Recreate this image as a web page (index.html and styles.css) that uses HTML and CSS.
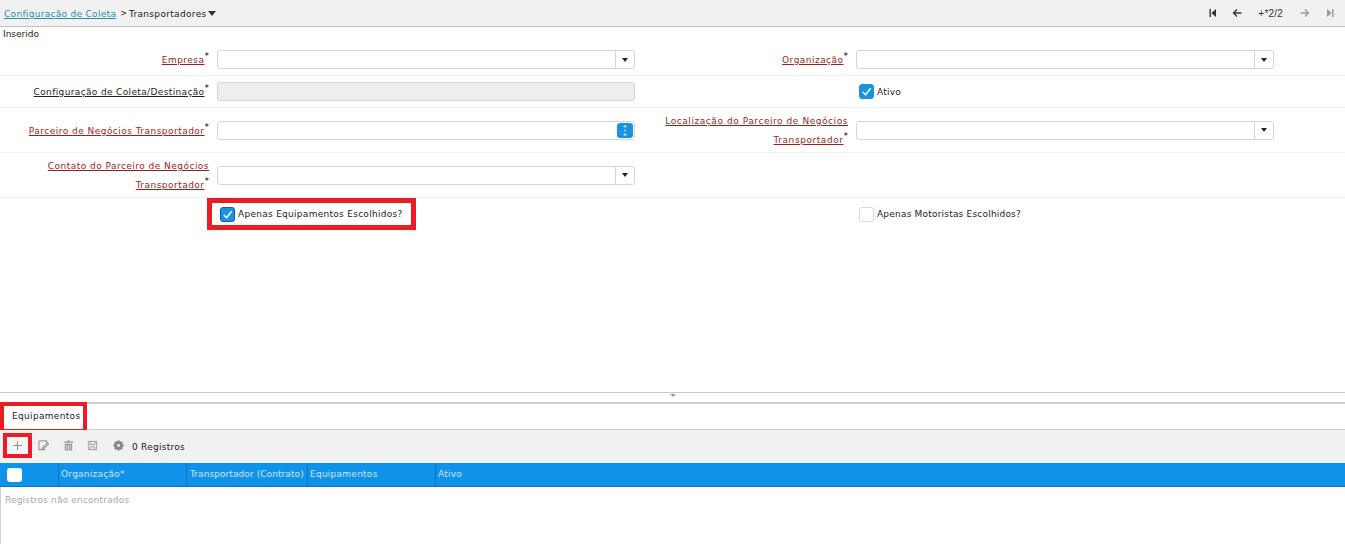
FILE: index.html
```html
<!DOCTYPE html>
<html lang="pt">
<head>
<meta charset="utf-8">
<title>Transportadores</title>
<link rel="stylesheet" href="styles.css">
</head>
<body>
<div class="page">
  <header class="topbar">
    <div class="crumbs">
      <a class="crumb-link" href="#">Configuração de Coleta</a>
      <span class="crumb-sep">&gt;</span>
      <span class="crumb-current">Transportadores</span>
      <span class="crumb-caret"></span>
    </div>
    <nav class="pager">
      <svg class="pg-icon" viewBox="0 0 10 10"><path d="M1.500 1v8h1.400V1zM8 1 3.400 5 8 9z" fill="#333"/></svg>
      <svg class="pg-icon arrow" viewBox="0 0 10 10"><path d="M9.500 5H1.500M5 1.500 1.500 5 5 8.500" fill="none" stroke="#333" stroke-width="1.300"/></svg>
      <span class="pg-count">+*2/2</span>
      <svg class="pg-icon arrow off" viewBox="0 0 10 10"><path d="M.5 5h8M5 1.500 8.500 5 5 8.500" fill="none" stroke="#999" stroke-width="1.300"/></svg>
      <svg class="pg-icon last off" viewBox="0 0 10 10"><path d="M8.500 1v8H7.100V1zM2 1l4.600 4L2 9z" fill="#999"/></svg>
    </nav>
  </header>
  <div class="status">Inserido</div>
  <main class="form">
    <div class="row r1">
      <label class="lbl req">Empresa<sup>*</sup></label>
      <div class="input combo"><span class="btn"><i class="tri"></i></span></div>
      <label class="lbl req">Organização<sup>*</sup></label>
      <div class="input combo"><span class="btn"><i class="tri"></i></span></div>
    </div>
    <div class="row r2">
      <label class="lbl">Configuração de Coleta/Destinação<sup>*</sup></label>
      <div class="input disabled"></div>
      <span></span>
      <div class="check-cell"><span class="cb on"><svg viewBox="0 0 14 14"><path d="M3 7.500 6 10.500 11.500 3.500" fill="none" stroke="#fff" stroke-width="1.600"/></svg></span><span class="cb-text">Ativo</span></div>
    </div>
    <div class="row r3">
      <label class="lbl req">Parceiro de Negócios Transportador<sup>*</sup></label>
      <div class="input search"><span class="dots"><svg viewBox="0 0 16 15"><path d="M8 3v1.500M8 6.500v2M8 10.500V12M6.500 4 8 2.500 9.500 4M6.500 11 8 12.500 9.500 11" fill="none" stroke="#fff" stroke-width="1"/></svg></span></div>
      <label class="lbl req wide"><span class="line">Localização do Parceiro de Negócios</span><span class="line">Transportador<sup>*</sup></span></label>
      <div class="input combo"><span class="btn"><i class="tri"></i></span></div>
    </div>
    <div class="row r3">
      <label class="lbl req"><span class="line">Contato do Parceiro de Negócios</span><span class="line">Transportador<sup>*</sup></span></label>
      <div class="input combo"><span class="btn"><i class="tri"></i></span></div>
    </div>
    <div class="row r5">
      <span></span>
      <div class="check-cell mark"><span class="cb on dark"><svg viewBox="0 0 14 14"><path d="M3 7.500 6 10.500 11.500 3.500" fill="none" stroke="#fff" stroke-width="1.600"/></svg></span><span class="cb-text">Apenas Equipamentos Escolhidos?</span></div>
      <span></span>
      <div class="check-cell"><span class="cb"></span><span class="cb-text">Apenas Motoristas Escolhidos?</span></div>
    </div>
  </main>
  <div class="splitter"><i class="split-tri"></i></div>
  <section class="detail">
    <div class="tabs"><span class="tab">Equipamentos</span></div>
    <div class="toolbar">
      <span class="tool add"><svg viewBox="0 0 12 12"><path d="M6 1v10M1 6h10" stroke="#888" stroke-width="1" fill="none"/></svg></span>
      <svg class="tool-icon edit" viewBox="0 0 12 12"><path d="M1 1h8.500v2.500M8 10.500H1V1M4.500 8.500l6-5.500 1 1.500-5.500 5-1.500.3z" fill="none" stroke="#999" stroke-width="1.200"/></svg>
      <svg class="tool-icon trash" viewBox="0 0 12 12"><path d="M4.500 .5h3v1H11V3H1V1.500h3.500zM2 4h8v7.500H2z" fill="#999"/><path d="M4 5.500v5M6 5.500v5M8 5.500v5" stroke="#eee" stroke-width=".8"/></svg>
      <svg class="tool-icon save" viewBox="0 0 12 12"><path d="M1.500 1.500h9v9h-9zM3.500 1.500v3.500h5v-3.500M3.500 10.500V7.500h5v3" fill="none" stroke="#999" stroke-width="1"/></svg>
      <svg class="tool-icon gear" viewBox="0 0 12 12"><path d="M4.700.5h2.600l.3 1.600 1.300-.9 1.900 1.900-.9 1.300 1.600.3v2.600l-1.600.3.900 1.300-1.900 1.900-1.300-.9-.3 1.600H4.700l-.3-1.600-1.300.9L1.200 8.900l.9-1.300L.5 7.300V4.700l1.600-.3-.9-1.300 1.900-1.900 1.300.9z" fill="#888"/><circle cx="6" cy="6" r="1.600" fill="#f1f1f1"/></svg>
      <span class="count">0 Registros</span>
    </div>
    <div class="thead">
      <div class="th th-check"><span class="head-cb"></span></div>
      <div class="th th-org">Organização*</div>
      <div class="th th-trans">Transportador (Contrato)</div>
      <div class="th th-eq">Equipamentos</div>
      <div class="th th-at">Ativo</div>
    </div>
    <div class="tbody">Registros não encontrados</div>
  </section>
</div>
</body>
</html>
```
FILE: styles.css
```css
* { box-sizing: border-box; }
html, body { margin: 0; padding: 0; height: 100%; overflow: hidden; }
body { font-family: "DejaVu Sans", Verdana, sans-serif; font-size: 9px; color: #222; background: #fff; }
.page { height: 544px; display: flex; flex-direction: column; }

.topbar { height: 27px; flex: none; background: #f1f1f1; border-bottom: 1px solid #c4c4c4; display: flex; justify-content: space-between; align-items: center; padding: 0 10px 0 4px; }
.crumbs { display: flex; align-items: center; padding-top: 1px; }
.crumb-link { color: #1f8fb5; text-decoration: underline; letter-spacing: .3px; }
.crumb-sep { margin: 0 2px 0 4px; font-size: 8px; }
.crumb-current { color: #222; letter-spacing: .33px; }
.crumb-caret { width: 0; height: 0; margin-left: 1px; border-left: 4px solid transparent; border-right: 4px solid transparent; border-top: 5px solid #333; }
.pager { display: flex; align-items: center; }
.pg-icon { width: 10px; height: 10px; display: block; }
.pg-icon.arrow { margin-left: 14px; }
.pg-count { margin-left: 16px; margin-right: 3px; font-family: "Liberation Sans", Arial, sans-serif; font-size: 10px; color: #333; letter-spacing: .2px; }
.pg-icon.last { margin-left: 15px; }

.status { height: 17px; flex: none; padding: 0 0 0 3px; line-height: 15px; }

.form { flex: 1; min-height: 0; }
.row { display: grid; grid-template-columns: 209px 426px 213px 426px; align-items: center; border-bottom: 1px solid #f0f0f0; }
.r1 { height: 32px; }
.r2 { height: 32px; }
.r3 { height: 45px; }
.r5 { height: 32px; border-bottom: 0; }
.lbl { display: block; padding-top: 2px; text-align: right; line-height: 19px; text-decoration: underline; color: #222; letter-spacing: .36px; }
.lbl.req { color: #9c1c24; letter-spacing: .47px; }
.lbl.req.wide { letter-spacing: .56px; }
.line { display: block; }
.lbl sup { display: inline-block; font-size: 9px; line-height: 9px; vertical-align: 4px; color: #000; text-decoration: none; margin-left: 0; letter-spacing: 0; }
.input { margin-left: 8px; width: 418px; height: 19px; border: 1px solid #d5d5d5; border-radius: 3px; background: #fff; display: flex; justify-content: flex-end; align-items: center; }
.input.disabled { background: #eee; }
.btn { width: 19px; height: 17px; border-left: 1px solid #d5d5d5; display: flex; align-items: center; justify-content: center; }
.tri { width: 0; height: 0; border-left: 3.500px solid transparent; border-right: 3.500px solid transparent; border-top: 4px solid #222; }
.dots { width: 16px; height: 15px; margin-right: 1px; background: #1a92e0; border-radius: 3px; display: block; }
.dots svg { display: block; width: 16px; height: 15px; }
.check-cell { margin-left: 11px; display: flex; align-items: center; }
.cb { width: 15px; height: 15px; border-radius: 3px; border: 1px solid #d8d8d8; background: #fff; display: block; margin-right: 3px; }
.cb.on { background: #1a92e0; border-color: #1a92e0; }
.cb.dark { border-color: #0b5fb5; }
.cb svg { display: block; width: 13px; height: 13px; }
.cb-text { letter-spacing: .2px; }
.mark .cb-text { letter-spacing: .28px; }
.mark { width: 199px; height: 22px; margin-left: 3px; padding-left: 8px; outline: 5px solid #ed1c24; }

.splitter { flex: none; height: 12px; border-top: 1px solid #c8c8c8; border-bottom: 2px solid #cfcfcf; display: flex; justify-content: center; }
.split-tri { width: 0; height: 0; margin-top: 1px; border-left: 3px solid transparent; border-right: 3px solid transparent; border-top: 3px solid #9a9a9a; }

.detail { flex: none; height: 140px; display: flex; flex-direction: column; }
.tabs { height: 26px; flex: none; border-bottom: 1px solid #cfcfcf; padding-left: 4px; display: flex; }
.tab { width: 79px; height: 23px; margin-top: 2px; outline: 4px solid #ed1c24; padding-left: 8px; line-height: 20px; color: #222; letter-spacing: .32px; }
.toolbar { height: 33px; flex: none; background: #f1f1f1; display: flex; align-items: center; padding-bottom: 2px; }
.tool.add { width: 21px; height: 17px; margin-left: 7px; background: #f6f6f6; outline: 4px solid #ed1c24; display: flex; align-items: center; justify-content: center; }
.tool.add svg { width: 11px; height: 11px; }
.tool-icon { width: 11px; height: 11px; display: block; }
.tool-icon.edit { margin-left: 10px; }
.tool-icon.trash { margin-left: 14px; }
.tool-icon.save { margin-left: 13px; }
.tool-icon.gear { margin-left: 15px; }
.count { margin-left: 8px; letter-spacing: .25px; padding-top: 3px; }
.thead { height: 24px; flex: none; background: #0f93ea; border-bottom: 1px solid #0a72c5; display: flex; color: #cfe8fb; letter-spacing: .25px; }
.th { border-left: 1px solid #0a72c5; padding-left: 2px; line-height: 23px; white-space: nowrap; }
.th-check { width: 58px; border-left: 0; display: flex; align-items: center; padding-left: 7px; }
.head-cb { width: 15px; height: 14px; background: #fff; border-radius: 3px; }
.th-org { width: 128px; }
.th-trans { width: 121px; letter-spacing: .08px; padding-left: 3px; }
.th-eq { width: 128px; }
.th-at { flex: 1; }
.tbody { flex: 1; border-left: 1px solid #d0d0d0; padding: 8px 0 0 4px; color: #a8a8a8; letter-spacing: .17px; }
```
